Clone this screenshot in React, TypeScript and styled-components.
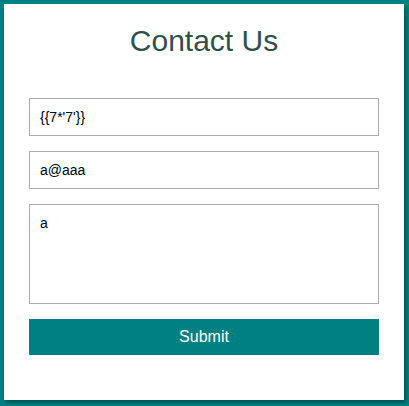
import styled, { createGlobalStyle } from 'styled-components';

const GlobalStyle = createGlobalStyle`
  html, body {
    margin: 0;
    padding: 0;
    background: #008080;
    font-family: 'Liberation Sans', Arial, sans-serif;
  }
  * {
    box-sizing: border-box;
  }
`;

const Page = styled.div`
  padding: 4px;
`;

const Card = styled.div`
  width: 400px;
  height: 396px;
  background: #ffffff;
  padding: 19px 25px 45px;
  box-shadow: 2px 3px 4px rgba(0, 0, 0, 0.35);
`;

const Title = styled.h2`
  margin: 0 0 40px;
  font-size: 30px;
  font-weight: 400;
  line-height: 35px;
  text-align: center;
  color: #2f4f4f;
`;

const Form = styled.form`
  display: flex;
  flex-direction: column;
  gap: 15px;
`;

const Field = styled.input`
  width: 100%;
  height: 38px;
  padding: 10px;
  border: 1px solid #aaaaaa;
  font-family: 'Liberation Sans', Arial, sans-serif;
  font-size: 14px;
  color: #000;
  outline: none;
`;

const Message = styled.textarea`
  width: 100%;
  height: 100px;
  padding: 10px;
  border: 1px solid #aaaaaa;
  font-family: 'Liberation Sans', Arial, sans-serif;
  font-size: 14px;
  color: #000;
  resize: none;
  outline: none;
`;

const SubmitButton = styled.button`
  width: 100%;
  height: 36px;
  border: none;
  background: #008080;
  color: #ffffff;
  font-family: 'Liberation Sans', Arial, sans-serif;
  font-size: 16px;
  cursor: pointer;
`;

export default function App() {
  return (
    <>
      <GlobalStyle />
      <Page>
        <Card>
          <Title>Contact Us</Title>
          <Form onSubmit={(e) => e.preventDefault()}>
            <Field type="text" defaultValue={'{{7*\'7\'}}'} />
            <Field type="email" defaultValue="a@aaa" />
            <Message defaultValue="a" />
            <SubmitButton type="submit">Submit</SubmitButton>
          </Form>
        </Card>
      </Page>
    </>
  );
}
